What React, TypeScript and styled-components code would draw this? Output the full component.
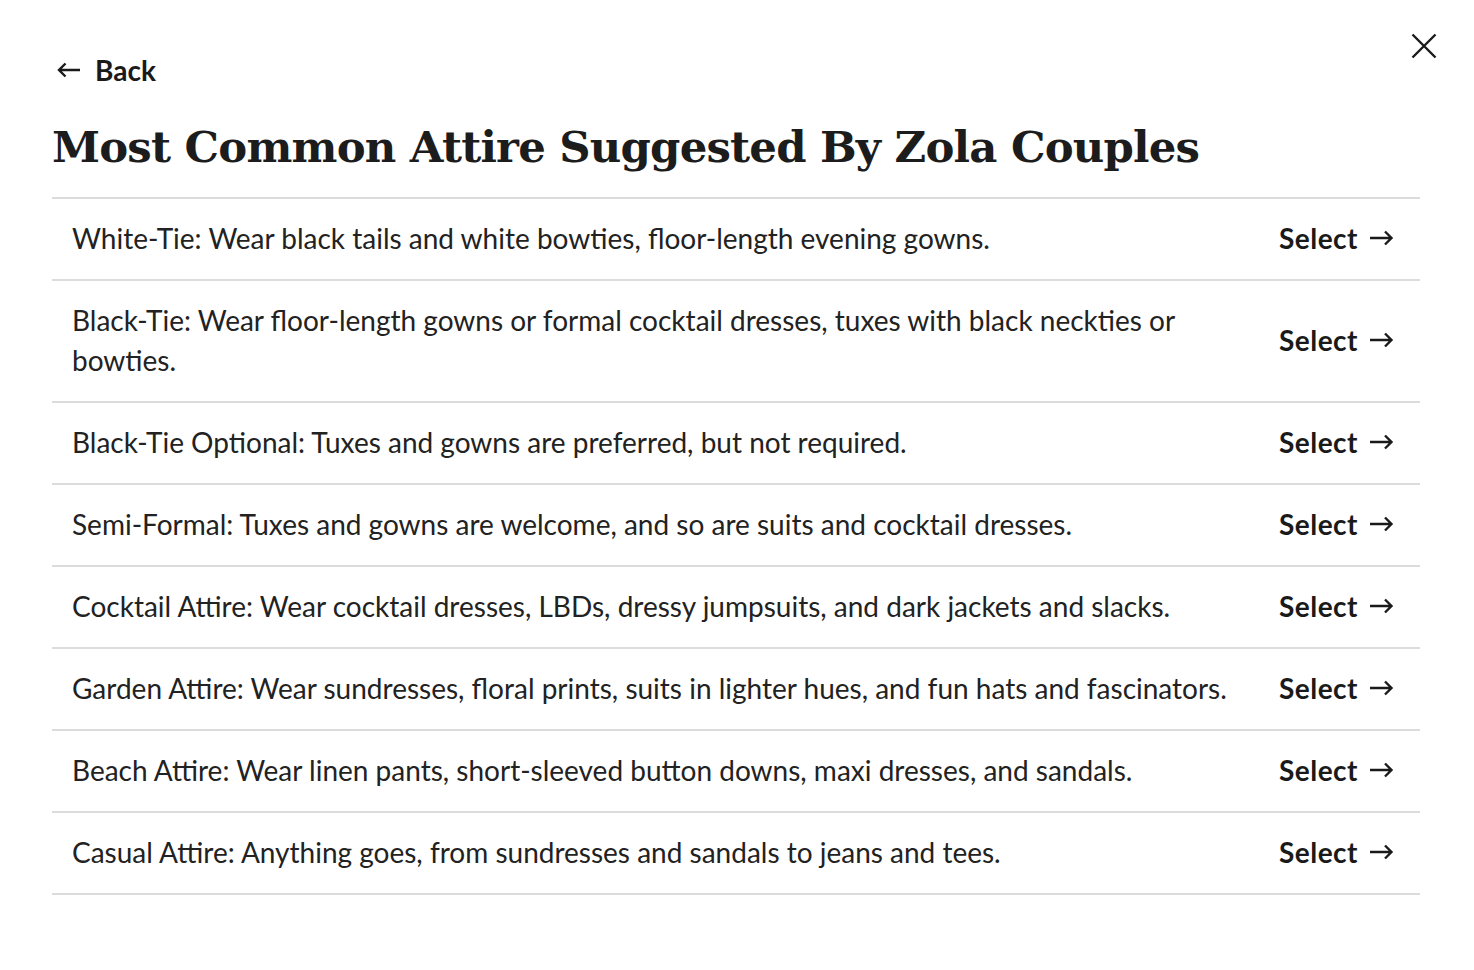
import { createGlobalStyle } from "styled-components";
import styled from "styled-components";

const GlobalStyle = createGlobalStyle`
  body {
    margin: 0;
    background: #ffffff;
    font-family: "Lato", "Liberation Sans", sans-serif;
    color: #1f1f1f;
  }
`;

const options = [
  "White-Tie: Wear black tails and white bowties, floor-length evening gowns.",
  "Black-Tie: Wear floor-length gowns or formal cocktail dresses, tuxes with black neckties or bowties.",
  "Black-Tie Optional: Tuxes and gowns are preferred, but not required.",
  "Semi-Formal: Tuxes and gowns are welcome, and so are suits and cocktail dresses.",
  "Cocktail Attire: Wear cocktail dresses, LBDs, dressy jumpsuits, and dark jackets and slacks.",
  "Garden Attire: Wear sundresses, floral prints, suits in lighter hues, and fun hats and fascinators.",
  "Beach Attire: Wear linen pants, short-sleeved button downs, maxi dresses, and sandals.",
  "Casual Attire: Anything goes, from sundresses and sandals to jeans and tees.",
];

const ArrowLeft = () => (
  <svg width="24" height="16" viewBox="0 0 24 16" fill="none">
    <path d="M23 8H2M8.5 1.5L2 8l6.5 6.5" stroke="#1a1a1a" strokeWidth="2.4" />
  </svg>
);

const ArrowRight = () => (
  <svg width="25" height="16" viewBox="0 0 25 16" fill="none">
    <path d="M1 8h21.5M16 1.5L22.5 8 16 14.5" stroke="#1a1a1a" strokeWidth="2.4" />
  </svg>
);

const CloseIcon = () => (
  <svg width="26" height="26" viewBox="0 0 26 26" fill="none">
    <path d="M1.5 1.5l23 23M24.5 1.5l-23 23" stroke="#1a1a1a" strokeWidth="2.4" />
  </svg>
);

let App = () => {
  return (
    <>
      <GlobalStyle />
      <Modal>
        <CloseButton aria-label="Close">
          <CloseIcon />
        </CloseButton>

        {/* HEADER */}
        <BackLink>
          <ArrowLeft />
          <span>Back</span>
        </BackLink>
        <Title>Most Common Attire Suggested By Zola Couples</Title>

        {/* OPTIONS */}
        <OptionList>
          {options.map((text) => (
            <OptionRow key={text}>
              <OptionText>{text}</OptionText>
              <SelectButton>
                <span>Select</span>
                <ArrowRight />
              </SelectButton>
            </OptionRow>
          ))}
        </OptionList>
      </Modal>
    </>
  );
};

export default App;

const Modal = styled.div`
  position: relative;
  padding: 52px 54px 0 52px;
  min-height: 970px;
  box-sizing: border-box;
`;

const CloseButton = styled.button`
  position: absolute;
  top: 33px;
  right: 37px;
  border: none;
  background: none;
  padding: 0;
  display: flex;
  cursor: pointer;
`;

const BackLink = styled.div`
  display: flex;
  align-items: center;
  gap: 14px;
  margin-left: 5px;
  font-size: 28px;
  font-weight: 700;
  color: #1a1a1a;
  line-height: 36px;
`;

const Title = styled.h1`
  margin: 26px 0 17px;
  font-family: "DejaVu Serif", "Liberation Serif", serif;
  font-size: 43.4px;
  font-weight: 700;
  letter-spacing: -0.8px;
  line-height: 66px;
  color: #1c1c1c;
`;

const OptionList = styled.div`
  border-top: 2px solid #dcdcdc;
`;

const OptionRow = styled.div`
  display: flex;
  align-items: center;
  justify-content: space-between;
  gap: 40px;
  padding: 19px 26px 21px 20px;
  border-bottom: 2px solid #dcdcdc;
`;

const OptionText = styled.div`
  font-size: 28px;
  line-height: 40px;
  color: #222222;
`;

const SelectButton = styled.div`
  display: flex;
  align-items: center;
  gap: 11px;
  flex-shrink: 0;
  font-size: 28px;
  font-weight: 700;
  letter-spacing: 0.5px;
  color: #1a1a1a;
  cursor: pointer;
`;
